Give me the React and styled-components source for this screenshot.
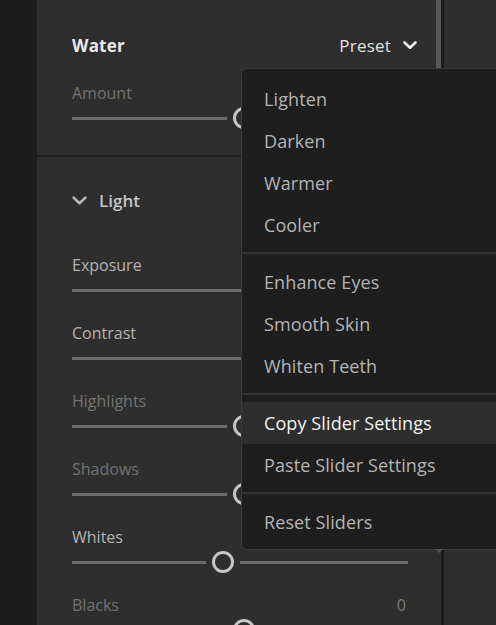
import React from "react";
import styled, { createGlobalStyle } from "styled-components";

const GlobalStyle = createGlobalStyle`
  html, body { margin: 0; padding: 0; background: #1d1d1d; overflow: hidden; }
  body { font-family: "Open Sans", "Noto Sans", sans-serif; -webkit-font-smoothing: antialiased; }
`;

const Page = styled.div`
  position: relative;
  display: flex;
  width: 496px;
  height: 625px;
  overflow: hidden;
  background: #1d1d1d;
`;

const LeftStrip = styled.div`
  flex: 0 0 37px;
  background: #1d1d1d;
`;

const Panel = styled.div`
  flex: 0 0 399px;
  background: #2e2e2e;
  display: flex;
  flex-direction: column;
`;

const Scrollbar = styled.div`
  flex: 0 0 5px;
  background: #2e2e2e;
  display: flex;
  flex-direction: column;
`;

const ScrollThumb = styled.div`
  height: 360px;
  background: #585858;
`;

const Separator = styled.div`
  flex: 0 0 3px;
  background: #1a1a1a;
`;

const RightArea = styled.div`
  flex: 1;
  background: #2e2e2e;
`;

const Section = styled.section`
  display: flex;
  flex-direction: column;
  padding: ${(p) => p.$pt}px 28px ${(p) => p.$pb}px 35px;
  border-bottom: ${(p) => (p.$divider ? "2px solid #1f1f1f" : "none")};
`;

const Header = styled.div`
  display: flex;
  align-items: center;
  justify-content: space-between;
  height: 40px;
  margin-right: -9px;
  margin-bottom: ${(p) => p.$mb}px;
`;

const Title = styled.div`
  font-size: 17px;
  font-weight: 700;
  color: #e9e9e9;
  letter-spacing: 0.2px;
`;

const PresetButton = styled.div`
  display: flex;
  align-items: center;
  gap: 12px;
  font-size: 17px;
  color: #e2e2e2;
  letter-spacing: 0.2px;
`;

const GroupTitle = styled.div`
  display: flex;
  align-items: center;
  gap: 12px;
  font-size: 17px;
  font-weight: 600;
  color: #c4c4c4;
  margin-top: -2px;
`;

const Row = styled.div`
  display: flex;
  flex-direction: column;
  height: 68px;
`;

const LabelLine = styled.div`
  display: flex;
  justify-content: space-between;
  align-items: center;
  height: 24px;
  margin-bottom: 2px;
  font-size: 16px;
  color: ${(p) => (p.$dim ? "#737373" : "#b3b3b3")};
`;

const Value = styled.span`
  font-size: 16px;
  color: #7c7c7c;
  margin-right: 2px;
`;

const Track = styled.div`
  display: flex;
  align-items: center;
  height: 22px;
`;

const Bar = styled.div`
  height: 3px;
  background: #6c6c6c;
  flex: ${(p) => (p.$grow ? "1" : "0 0 auto")};
`;

const Thumb = styled.div`
  box-sizing: border-box;
  flex: 0 0 22px;
  height: 22px;
  margin: 0 6px;
  border-radius: 50%;
  border: 3px solid #c6c6c6;
  background: #2e2e2e;
`;

const Menu = styled.div`
  position: absolute;
  left: 241px;
  top: 68px;
  width: 280px;
  box-sizing: border-box;
  padding: 9px 0 6px;
  background: #1e1e1e;
  border: 1.5px solid #3a3a3a;
  border-radius: 6px;
  display: flex;
  flex-direction: column;
`;

const Item = styled.div`
  height: 42px;
  display: flex;
  align-items: center;
  padding-left: 22px;
  font-size: 18px;
  letter-spacing: 0.1px;
  color: ${(p) => (p.$active ? "#f2f2f2" : "#b4b4b4")};
  background: ${(p) => (p.$active ? "#2e2e2e" : "transparent")};
`;

const MenuDivider = styled.div`
  height: 2px;
  margin: 6px 0 7px;
  background: #333333;
`;

const Pointer = styled.div`
  position: absolute;
  left: 435px;
  top: 549px;
  width: 0;
  height: 0;
  border-left: 4px solid transparent;
  border-right: 4px solid transparent;
  border-top: 4px solid #555;
`;

const Chevron = ({ size = 14, color, weight = 2.6 }) => (
  <svg width={size} height={size * 0.6} viewBox="0 0 14 8.4" fill="none">
    <path
      d="M1.5 1.5 L7 6.8 L12.5 1.5"
      stroke={color}
      strokeWidth={weight}
      strokeLinecap="round"
      strokeLinejoin="round"
    />
  </svg>
);

const Slider = ({ label, dim, pct, value }) => (
  <Row>
    <LabelLine $dim={dim}>
      <span>{label}</span>
      {value !== undefined && <Value>{value}</Value>}
    </LabelLine>
    <Track>
      <Bar style={{ width: `calc(${pct}% - 17px)` }} />
      <Thumb />
      <Bar $grow />
    </Track>
  </Row>
);

const lightSliders = [
  { label: "Exposure", pct: 60 },
  { label: "Contrast", pct: 60 },
  { label: "Highlights", pct: 51.2, dim: true },
  { label: "Shadows", pct: 51.2, dim: true },
  { label: "Whites", pct: 45 },
  { label: "Blacks", pct: 51.2, dim: true, value: "0" },
];

const groups = [
  ["Lighten", "Darken", "Warmer", "Cooler"],
  ["Enhance Eyes", "Smooth Skin", "Whiten Teeth"],
  ["Copy Slider Settings", "Paste Slider Settings"],
  ["Reset Sliders"],
];

export default function App() {
  return (
    <>
      <GlobalStyle />
      <Page>
        <LeftStrip />
        <Panel>
          <Section $pt={25} $pb={6} $divider>
            <Header $mb={16}>
              <Title>Water</Title>
              <PresetButton>
                Preset
                <Chevron color="#f0f0f0" />
              </PresetButton>
            </Header>
            <Slider label="Amount" dim pct={51.2} />
          </Section>
          <Section $pt={24} $pb={0}>
            <Header $mb={32}>
              <GroupTitle>
                <Chevron size={15} color="#b8b8b8" weight={2.4} />
                Light
              </GroupTitle>
            </Header>
            {lightSliders.map((s) => (
              <Slider key={s.label} {...s} />
            ))}
          </Section>
        </Panel>
        <Scrollbar>
          <ScrollThumb />
        </Scrollbar>
        <Separator />
        <RightArea />
        <Menu>
          {groups.map((g, gi) => (
            <React.Fragment key={gi}>
              {gi > 0 && <MenuDivider />}
              {g.map((it) => (
                <Item key={it} $active={it === "Copy Slider Settings"}>
                  {it}
                </Item>
              ))}
            </React.Fragment>
          ))}
        </Menu>
        <Pointer />
      </Page>
    </>
  );
}
